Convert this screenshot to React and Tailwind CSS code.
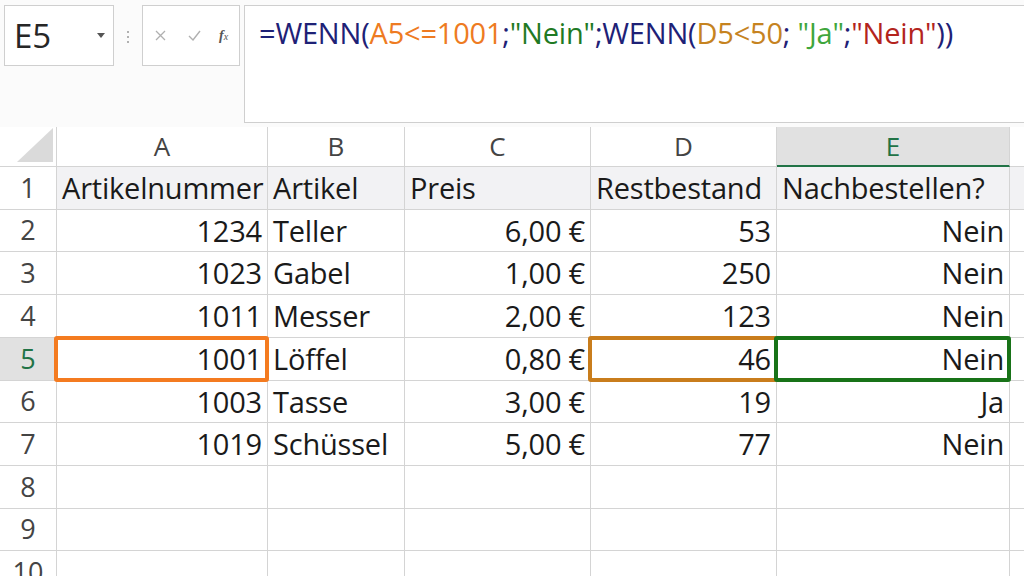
import React from 'react';

const font = { fontFamily: '"Open Sans", "Noto Sans", sans-serif' };

const cols = ['A', 'B', 'C', 'D', 'E'];

const rows = [
  ['Artikelnummer', 'Artikel', 'Preis', 'Restbestand', 'Nachbestellen?'],
  ['1234', 'Teller', '6,00 €', '53', 'Nein'],
  ['1023', 'Gabel', '1,00 €', '250', 'Nein'],
  ['1011', 'Messer', '2,00 €', '123', 'Nein'],
  ['1001', 'Löffel', '0,80 €', '46', 'Nein'],
  ['1003', 'Tasse', '3,00 €', '19', 'Ja'],
  ['1019', 'Schüssel', '5,00 €', '77', 'Nein'],
  ['', '', '', '', ''],
  ['', '', '', '', ''],
  ['', '', '', '', ''],
];

const rowHeights = ['h-[43px]', 'h-[42px]', 'h-[43px]', 'h-[43px]', 'h-[43px]', 'h-[42px]', 'h-[43px]', 'h-[43px]', 'h-[42px]', 'h-[43px]'];

const boxes = {
  '4-0': 'border-[#f47b20]',
  '4-3': 'border-[#c97d1c]',
  '4-4': 'border-[#187318]',
};

function FormulaBar() {
  return (
    <div className="flex h-[127px] items-start bg-[#fbfbfb]">
      <div className="mt-[5px] ml-[4px] flex h-[61px] w-[110px] items-center justify-between border border-[#cfcfcf] bg-white pl-[9px] pr-[8px]">
        <span className="text-[33px] leading-none text-[#262626]">E5</span>
        <svg width="8" height="5" viewBox="0 0 8 5"><path d="M0 0h8L4 5z" fill="#555" /></svg>
      </div>
      <div className="mt-[31px] ml-[13px] flex w-[2px] flex-col gap-[3px]">
        <span className="h-[2px] w-[2px] rounded-full bg-[#999]" />
        <span className="h-[2px] w-[2px] rounded-full bg-[#999]" />
        <span className="h-[2px] w-[2px] rounded-full bg-[#999]" />
      </div>
      <div className="mt-[5px] ml-[13px] flex h-[61px] w-[98px] items-center border border-[#cfcfcf] bg-white pl-[12px]">
        <svg width="11" height="11" viewBox="0 0 11 11"><path d="M1 1l9 9M10 1l-9 9" stroke="#b0b0b0" strokeWidth="1.3" /></svg>
        <svg className="ml-[22px]" width="13" height="11" viewBox="0 0 13 11"><path d="M1 6l4 4 7-9" stroke="#b0b0b0" strokeWidth="1.4" fill="none" /></svg>
        <span className="ml-[18px] text-[14px] italic text-[#555]" style={{ fontFamily: '"Liberation Serif", serif' }}>
          <b>f</b><span className="text-[10px]">x</span>
        </span>
      </div>
      <div className="mt-[5px] ml-[4px] h-[118px] flex-1 border-t border-l border-b border-[#cfcfcf] bg-white pl-[14px] pt-[9px] text-[29px] leading-[36px] tracking-[-0.2px] text-[#1e2176]">
        <span>=WENN(</span>
        <span className="text-[#ee7b22]">A5&lt;=1001</span>
        <span>;</span>
        <span className="text-[#1f7a24]">"Nein"</span>
        <span>;WENN(</span>
        <span className="text-[#c6831f]">D5&lt;50</span>
        <span>; </span>
        <span className="text-[#3fa63c]">"Ja"</span>
        <span>;</span>
        <span className="text-[#b3241d]">"Nein"</span>
        <span>))</span>
      </div>
    </div>
  );
}

export default function App() {
  return (
    <div className="h-screen w-screen overflow-hidden bg-white text-[#1a1a1a]" style={font}>
      <FormulaBar />
      <div className="grid grid-cols-[57px_211px_137px_186px_186px_233px_14px]">
        {/* column headers */}
        <div className="relative h-[40px] border-r border-b border-[#d4d4d4] bg-white">
          <svg className="absolute right-[3px] bottom-[4px]" width="36" height="34" viewBox="0 0 36 34">
            <path d="M36 0V34H0z" fill="#dadada" />
          </svg>
        </div>
        {cols.map((c) => (
          <div
            key={c}
            className={
              c === 'E'
                ? 'flex h-[40px] items-center justify-center border-r border-b-2 border-r-[#d4d4d4] border-b-[#217346] bg-[#e1e1e1] text-[26px] text-[#217346]'
                : 'flex h-[40px] items-center justify-center border-r border-b border-[#d4d4d4] bg-white text-[26px] text-[#444]'
            }
          >
            {c}
          </div>
        ))}
        <div className="h-[40px] border-b border-[#d4d4d4]" />

        {rows.map((r, i) => (
          <React.Fragment key={i}>
            <div
              className={
                (i === 4 ? 'bg-[#e1e1e1] text-[#217346] ' : 'bg-white text-[#444] ') +
                rowHeights[i] +
                ' flex items-center justify-center border-r border-b border-[#d4d4d4] text-[27px]'
              }
            >
              {i + 1}
            </div>
            {r.map((v, j) => {
              const left = i === 0 || j === 1;
              const box = boxes[i + '-' + j];
              return (
                <div
                  key={j}
                  className={
                    rowHeights[i] +
                    ' relative flex items-center whitespace-nowrap border-r border-b border-[#d4d4d4] px-[5px] text-[29px] tracking-[-0.2px] ' +
                    (i === 0 ? 'bg-[#f2f2f4] ' : 'bg-white ') +
                    (left ? 'justify-start' : 'justify-end')
                  }
                >
                  {v}
                  {box && <div className={'absolute -top-[2px] -bottom-[2px] -left-[3px] -right-[2px] z-10 rounded-[3px] border-4 ' + box} />}
                </div>
              );
            })}
            <div className={rowHeights[i] + ' border-b border-[#d4d4d4] ' + (i === 0 ? 'bg-[#f2f2f4]' : 'bg-white')} />
          </React.Fragment>
        ))}
      </div>
    </div>
  );
}
